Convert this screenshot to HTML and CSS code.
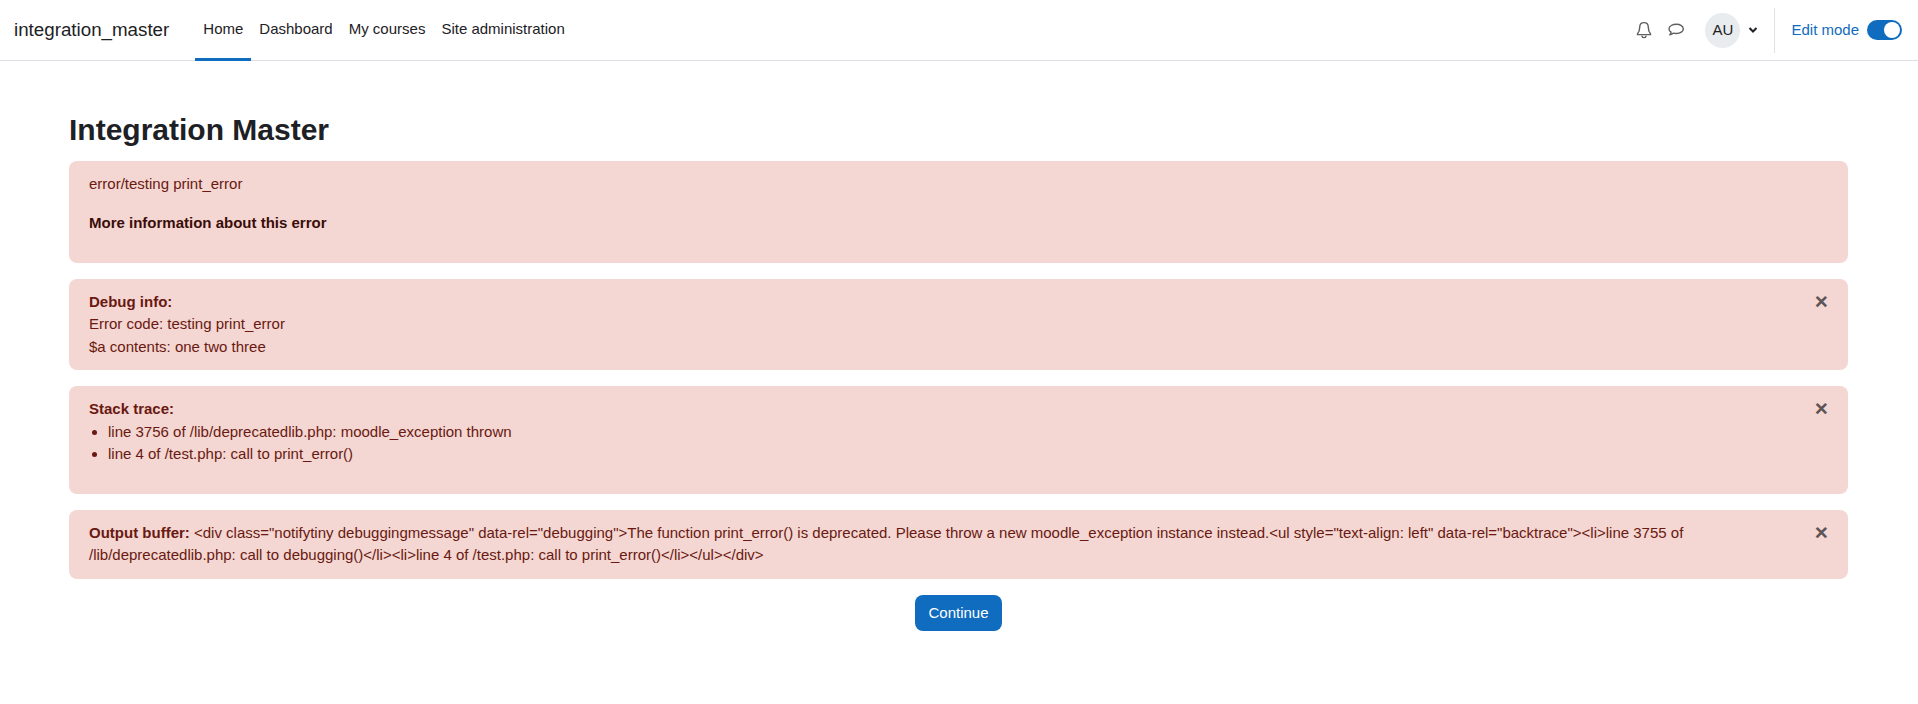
FILE: index.html
```html
<!DOCTYPE html>
<html lang="en">
<head>
    <meta charset="UTF-8">
    <title>Integration Master</title>
    <link rel="stylesheet" href="styles.css">
</head>
<body>
    <nav class="navbar">
        <a class="brand" href="#">integration_master</a>
        <ul class="primary-nav">
            <li class="active"><a href="#">Home</a></li>
            <li><a href="#">Dashboard</a></li>
            <li><a href="#">My courses</a></li>
            <li><a href="#">Site administration</a></li>
        </ul>
        <div class="usernav">
            <svg class="icon-bell" width="16" height="18" viewBox="0 0 16 18" fill="none" stroke="#5f5f5f" stroke-width="1.4">
                <path d="M8 1.6c-2.8 0-4.3 2-4.3 4.6 0 3.2-.7 5-2.2 6.6v.8h13v-.8c-1.5-1.6-2.2-3.4-2.2-6.6C12.300 3.600 10.800 1.600 8 1.600z"/>
                <path d="M6 15.200c.3 1 1 1.400 2 1.400s1.700-.4 2-1.400" stroke-linecap="round"/>
            </svg>
            <svg class="icon-chat" width="18" height="16" viewBox="0 0 18 16" fill="none" stroke="#5f5f5f" stroke-width="1.400">
                <path d="M9.500 2.200c-4 0-7.500 1.900-7.500 4.700 0 1.400.9 2.500 2.100 3.300-.2 1-.7 1.900-1.300 2.700 1.500-.2 2.800-.9 3.800-1.800.9.300 1.900.4 2.900.4 3.800 0 6.800-2 6.800-4.600s-3-4.700-6.800-4.700z" stroke-linejoin="round"/>
            </svg>
            <div class="avatar">AU</div>
            <svg class="icon-caret" width="10" height="8" viewBox="0 0 10 8" fill="none" stroke="#1d2125" stroke-width="2">
                <path d="M1.500 2l3.500 3.500L8.500 2"/>
            </svg>
            <div class="divider"></div>
            <a class="editmode" href="#">Edit mode</a>
            <span class="switch"><span class="knob"></span></span>
        </div>
    </nav>

    <main class="page">
        <h1>Integration Master</h1>

        <div class="alert alert-first">
            <p class="errormessage">error/testing print_error</p>
            <p class="moreinfo"><a href="#">More information about this error</a></p>
        </div>

        <div class="alert">
            <button class="close" type="button">&times;</button>
            <strong>Debug info:</strong><br>
            Error code: testing print_error<br>
            $a contents: one two three
        </div>

        <div class="alert">
            <button class="close" type="button">&times;</button>
            <strong>Stack trace:</strong>
            <ul class="backtrace">
                <li>line 3756 of /lib/deprecatedlib.php: moodle_exception thrown</li>
                <li>line 4 of /test.php: call to print_error()</li>
            </ul>
        </div>

        <div class="alert">
            <button class="close" type="button">&times;</button>
            <strong>Output buffer:</strong> &lt;div class="notifytiny debuggingmessage" data-rel="debugging"&gt;The function print_error() is deprecated. Please throw a new moodle_exception instance instead.&lt;ul style="text-align: left" data-rel="backtrace"&gt;&lt;li&gt;line 3755 of /lib/deprecatedlib.php: call to debugging()&lt;/li&gt;&lt;li&gt;line 4 of /test.php: call to print_error()&lt;/li&gt;&lt;/ul&gt;&lt;/div&gt;
        </div>

        <div class="continue">
            <a class="btn" href="#">Continue</a>
        </div>
    </main>
</body>
</html>
```

FILE: styles.css
```css
body {
    margin: 0;
    font-family: "Liberation Sans", Arial, sans-serif;
    font-size: 15px;
    line-height: 22.5px;
    color: #1d2125;
    background-color: #fff;
}

a {
    text-decoration: none;
    color: inherit;
}

/* Barra superior */
.navbar {
    display: flex;
    align-items: center;
    height: 60px;
    border-bottom: 1px solid #dee2e6;
    padding: 0 14px;
}

.brand {
    font-size: 18.75px;
    margin-right: 26px;
}

.primary-nav {
    display: flex;
    align-self: stretch;
    list-style: none;
    margin: 0;
    padding: 0;
}

.primary-nav li {
    display: flex;
    align-items: center;
    padding: 0 8px;
    border-bottom: 3px solid transparent;
    margin-bottom: -1px;
}

.primary-nav li.active {
    border-bottom-color: #0f6cbf;
}

.usernav {
    display: flex;
    align-items: center;
    margin-left: auto;
}

.icon-chat {
    margin-left: 15px;
}

.avatar {
    width: 35px;
    height: 35px;
    border-radius: 50%;
    background-color: #e9ecef;
    display: flex;
    align-items: center;
    justify-content: center;
    margin-left: 20px;
}

.icon-caret {
    margin-left: 8px;
}

.divider {
    width: 1px;
    height: 45px;
    background-color: #dee2e6;
    margin: 0 16px 0 16px;
}

.editmode {
    color: #0f6cbf;
}

.switch {
    display: block;
    position: relative;
    width: 35px;
    height: 20px;
    border-radius: 10px;
    background-color: #0f6cbf;
    margin-left: 8px;
    margin-right: 2px;
}

.knob {
    position: absolute;
    top: 2px;
    right: 2px;
    width: 16px;
    height: 16px;
    border-radius: 50%;
    background-color: #fff;
}

/* Contenido */
.page {
    padding: 0 70px 0 69px;
}

h1 {
    font-size: 30px;
    line-height: 36px;
    font-weight: 700;
    margin: 0;
    padding-top: 51px;
    padding-bottom: 13px;
}

.alert {
    position: relative;
    background-color: #f4d6d2;
    color: #691911;
    border-radius: 8px;
    padding: 12px 52px 12px 20px;
    margin-bottom: 16px;
}

.alert-first {
    padding-bottom: 28px;
}

.errormessage {
    margin: 0 0 16.500px;
}

.moreinfo {
    margin: 0;
    font-weight: 700;
    color: #3a0d09;
}

.backtrace {
    margin: 0 0 16px;
    padding-left: 19px;
}

.close {
    position: absolute;
    top: 12px;
    right: 20px;
    padding: 0;
    border: none;
    background: none;
    font-family: inherit;
    font-size: 22.5px;
    line-height: 22.5px;
    font-weight: 700;
    color: #5c5456;
}

.continue {
    display: flex;
    justify-content: center;
}

.btn {
    background-color: #0f6cbf;
    color: #fff;
    border-radius: 8px;
    padding: 7px 13px;
}
```
